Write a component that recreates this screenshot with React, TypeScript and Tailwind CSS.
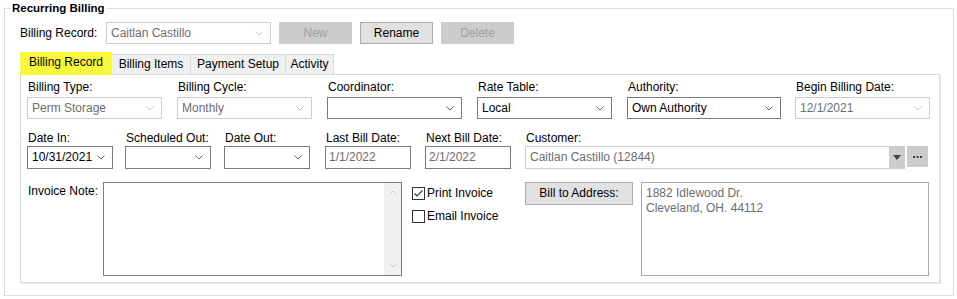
import type { ReactNode } from 'react'

function Chevron({ light, className = '' }: { light?: boolean; className?: string }) {
  return (
    <svg width="8" height="5" viewBox="0 0 8 5" className={`shrink-0 ${className}`}>
      <path d="M0.5 0.5 L4 4 L7.5 0.5" fill="none" stroke={light ? '#c6c6c6' : '#606060'} strokeWidth="1" />
    </svg>
  )
}

function Combo({ value = '', disabled, className = '' }: { value?: string; disabled?: boolean; className?: string }) {
  return (
    <div
      className={`flex items-center justify-between border pl-[4px] pr-[7px] ${
        disabled ? 'border-[#cccccc] text-[#6d6d6d]' : 'border-[#7a7a7a] text-black'
      } ${className}`}
    >
      <span className="leading-[15px] whitespace-nowrap">{value}</span>
      <Chevron light={disabled} />
    </div>
  )
}

function Field({ label, className = '', gap = 'mb-[2px]', children }: { label: string; className?: string; gap?: string; children: ReactNode }) {
  return (
    <div className={`flex flex-col ${className}`}>
      <span className={`leading-[15px] pl-px whitespace-nowrap ${gap}`}>{label}</span>
      {children}
    </div>
  )
}

function Checkbox({ checked, label }: { checked?: boolean; label: string }) {
  return (
    <div className="flex items-center gap-[2px] h-[15px]">
      <div className="w-[13px] h-[13px] border border-[#333333] bg-white flex items-center justify-center">
        {checked && (
          <svg width="11" height="11" viewBox="0 0 11 11">
            <path d="M1.5 5.5 L4 8 L9.5 2.5" fill="none" stroke="#333333" strokeWidth="1.1" />
          </svg>
        )}
      </div>
      <span className="leading-[15px]">{label}</span>
    </div>
  )
}

function Button({ children, disabled, className = '' }: { children: ReactNode; disabled?: boolean; className?: string }) {
  return (
    <div
      className={`flex items-center justify-center border leading-[15px] ${
        disabled ? 'bg-[#cccccc] border-[#cccccc] text-[#a0a0a0]' : 'bg-[#e1e1e1] border-[#adadad] text-black'
      } ${className}`}
    >
      {children}
    </div>
  )
}

const tabs = [
  { name: 'Billing Items', w: 'w-[79px]' },
  { name: 'Payment Setup', w: 'w-[96px]' },
  { name: 'Activity', w: 'w-[49px]' },
]

export default function App() {
  return (
    <div className="w-[957px] h-[299px] bg-white pt-[8px] pl-[4px] font-['Liberation_Sans',Arial,sans-serif] text-[12px] text-black overflow-hidden">
      {/* Group box */}
      <div className="relative w-[950px] h-[288px] border border-[#dcdcdc] pl-[15px] pt-[13px]">
        <span className="absolute left-[5px] top-[-8px] px-[2px] bg-white font-bold text-[11.5px] leading-[15px]">
          Recurring Billing
        </span>

        {/* Billing record row */}
        <div className="flex items-center h-[22px]">
          <span className="w-[86px] leading-[15px]">Billing Record:</span>
          <Combo value="Caitlan Castillo" disabled className="w-[165px] h-[22px]" />
          <Button disabled className="w-[73px] h-[22px] ml-[8px]">New</Button>
          <Button className="w-[73px] h-[22px] ml-[8px]">Rename</Button>
          <Button disabled className="w-[73px] h-[22px] ml-[8px]">Delete</Button>
        </div>

        {/* Tabs */}
        <div className="flex items-end h-[22px] mt-[8px]">
          <div className="relative z-10 w-[92px] h-[23px] -mb-px bg-[#f8f83c] flex justify-center pt-[3px]">
            <span className="leading-[15px]">Billing Record</span>
          </div>
          {tabs.map((t, i) => (
            <div
              key={t.name}
              className={`${t.w} h-[20px] bg-[#f0f0f0] border-t border-r border-[#d9d9d9] flex items-center justify-center ${
                i === 0 ? 'border-l-0' : '-ml-px border-l'
              }`}
            >
              <span className="leading-[15px]">{t.name}</span>
            </div>
          ))}
        </div>

        {/* Tab panel */}
        <div className="w-[920px] border border-[#d9d9d9] shadow-[1px_1px_0_0_#ececec] pt-[5px] pl-[6px] pb-[6px]">
          {/* Row 1 */}
          <div className="flex">
            <Field label="Billing Type:" className="w-[135px]">
              <Combo value="Perm Storage" disabled className="h-[22px]" />
            </Field>
            <Field label="Billing Cycle:" className="w-[135px] ml-[15px]">
              <Combo value="Monthly" disabled className="h-[22px]" />
            </Field>
            <Field label="Coordinator:" className="w-[135px] ml-[15px]">
              <Combo className="h-[22px]" />
            </Field>
            <Field label="Rate Table:" className="w-[135px] ml-[15px]">
              <Combo value="Local" className="h-[22px]" />
            </Field>
            <Field label="Authority:" className="w-[154px] ml-[15px]">
              <Combo value="Own Authority" className="h-[22px]" />
            </Field>
            <Field label="Begin Billing Date:" className="w-[135px] ml-[14px]">
              <Combo value="12/1/2021" disabled className="h-[22px]" />
            </Field>
          </div>

          {/* Row 2 */}
          <div className="flex mt-[12px]">
            <Field label="Date In:" gap="mb-0" className="w-[86px]">
              <Combo value="10/31/2021" className="h-[23px]" />
            </Field>
            <Field label="Scheduled Out:" gap="mb-0" className="w-[86px] ml-[12px]">
              <Combo className="h-[23px]" />
            </Field>
            <Field label="Date Out:" gap="mb-0" className="w-[86px] ml-[13px]">
              <Combo className="h-[23px]" />
            </Field>
            <Field label="Last Bill Date:" gap="mb-0" className="w-[86px] ml-[15px]">
              <div className="h-[23px] border border-[#7a7a7a] text-[#6d6d6d] pl-[3px] flex items-center leading-[15px]">1/1/2022</div>
            </Field>
            <Field label="Next Bill Date:" gap="mb-0" className="w-[86px] ml-[14px]">
              <div className="h-[23px] border border-[#7a7a7a] text-[#6d6d6d] pl-[3px] flex items-center leading-[15px]">2/1/2022</div>
            </Field>
            <Field label="Customer:" gap="mb-0" className="w-[380px] ml-[14px]">
              <div className="h-[23px] border border-[#cccccc] text-[#6d6d6d] flex">
                <span className="flex-1 pl-[4px] leading-[21px]">Caitlan Castillo (12844)</span>
                <div className="w-[15px] bg-[#cccccc] flex items-center justify-center">
                  <svg width="8" height="5" viewBox="0 0 8 5">
                    <path d="M0 0 H8 L4 5 Z" fill="#404040" />
                  </svg>
                </div>
              </div>
            </Field>
            <div className="self-end mb-[2px] ml-[2px] w-[21px] h-[21px] bg-[#cccccc] flex items-center justify-center">
              <svg width="9" height="2" viewBox="0 0 9 2">
                <rect x="0" y="0" width="2" height="2" fill="#404040" />
                <rect x="3.5" y="0" width="2" height="2" fill="#404040" />
                <rect x="7" y="0" width="2" height="2" fill="#404040" />
              </svg>
            </div>
          </div>

          {/* Row 3 */}
          <div className="flex mt-[13px]">
            <span className="w-[76px] leading-[15px] pl-px pt-[2px]">Invoice Note:</span>
            <div className="w-[299px] h-[94px] border border-[#7a7a7a] flex justify-end">
              <div className="w-[17px] bg-[#f0f0f0] flex flex-col items-center justify-between py-[7px]">
                <Chevron light className="rotate-180" />
                <Chevron light />
              </div>
            </div>
            <div className="flex flex-col gap-[8px] pt-[4px] ml-[10px] w-[113px]">
              <Checkbox checked label="Print Invoice" />
              <Checkbox label="Email Invoice" />
            </div>
            <Button className="w-[108px] h-[23px]">Bill to Address:</Button>
            <div className="w-[288px] h-[94px] ml-[8px] border border-[#a8a8a8] text-[#6d6d6d] px-[4px] pt-[3px] leading-[15px]">
              <div>1882 Idlewood Dr.</div>
              <div>Cleveland, OH. 44112</div>
            </div>
          </div>
        </div>
      </div>
    </div>
  )
}
